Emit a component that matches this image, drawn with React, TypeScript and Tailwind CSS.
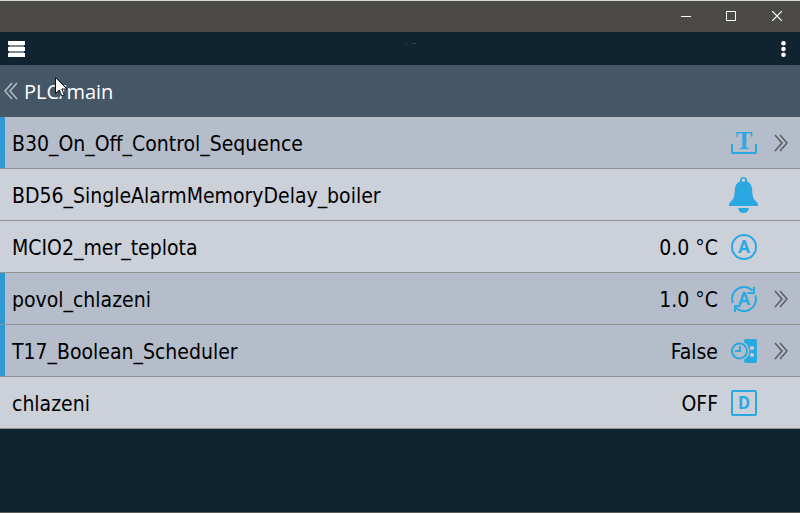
import type { ReactNode } from "react";

type IconName = "text" | "bell" | "analog" | "analogLoop" | "scheduler" | "digital";

type Point = {
  name: string;
  value?: string;
  icon: IconName;
  expandable?: boolean;
};

const points: Point[] = [
  { name: "B30_On_Off_Control_Sequence", icon: "text", expandable: true },
  { name: "BD56_SingleAlarmMemoryDelay_boiler", icon: "bell" },
  { name: "MCIO2_mer_teplota", value: "0.0 °C", icon: "analog" },
  { name: "povol_chlazeni", value: "1.0 °C", icon: "analogLoop", expandable: true },
  { name: "T17_Boolean_Scheduler", value: "False", icon: "scheduler", expandable: true },
  { name: "chlazeni", value: "OFF", icon: "digital" },
];

function Letter({ children }: { children: string }) {
  return (
    <text
      x="15"
      y="26"
      textAnchor="middle"
      fill="currentColor"
      className="font-['Roboto',sans-serif] text-[18px] font-bold"
    >
      {children}
    </text>
  );
}

const icons: Record<IconName, ReactNode> = {
  text: (
    <>
      <path
        d="M3 21v7.500q0 1.500 1.500 1.500h21q1.500 0 1.500-1.500V21"
        fill="none"
        stroke="currentColor"
        strokeWidth="2"
      />
      <text
        x="15"
        y="26"
        textAnchor="middle"
        fill="currentColor"
        className="font-['Liberation_Serif',serif] text-[25px] font-bold"
      >
        T
      </text>
    </>
  ),
  bell: (
    <>
      <path
        fill="currentColor"
        fillRule="evenodd"
        d="M14.500 2c2 0 3.500 1.400 3.500 3.200v1c3 1.300 4.700 4 5 7.300l.6 6.500c.3 3 1.600 4.700 3.600 6.500 1.300 1.200 1.800 2 1.800 4.500H0c0-2.500.5-3.300 1.800-4.500 2-1.800 3.300-3.500 3.600-6.500l.6-6.500c.3-3.300 2-6 5-7.300v-1C11 3.400 12.500 2 14.500 2zm0 1.600a1.700 1.700 0 1 0 0 3.400 1.700 1.700 0 0 0 0-3.400z"
      />
      <path d="M9 33h11c-.6 3-2.600 5-5.500 5S9.600 36 9 33z" fill="currentColor" />
    </>
  ),
  analog: (
    <>
      <circle cx="15" cy="20" r="12" fill="none" stroke="currentColor" strokeWidth="2" />
      <Letter>A</Letter>
    </>
  ),
  analogLoop: (
    <>
      <path
        d="M3.700 24.100A12 12 0 0 1 23.500 11.500M26.500 16.500A12 12 0 0 1 6.500 28.500"
        fill="none"
        stroke="currentColor"
        strokeWidth="2"
      />
      <path d="M18.500 14H25V8M11.500 27H6v6" fill="none" stroke="currentColor" strokeWidth="2" />
      <Letter>A</Letter>
    </>
  ),
  scheduler: (
    <>
      <path
        d="M17 8h9a2 2 0 0 1 2 2v20a2 2 0 0 1-2 2h-9a2 2 0 0 1-2-2v-1.500a9.500 9.500 0 0 0 0-17V10a2 2 0 0 1 2-2z"
        fill="currentColor"
      />
      <circle cx="10.500" cy="20" r="7.500" fill="none" stroke="currentColor" strokeWidth="2" />
      <path d="M11 15v5H6" fill="none" stroke="currentColor" strokeWidth="2" />
      <circle cx="23" cy="17" r="2" className="fill-[#ccd0d9]" />
      <circle cx="23" cy="24" r="2" className="fill-[#ccd0d9]" />
    </>
  ),
  digital: (
    <>
      <rect x="3" y="8" width="24" height="24" rx="1" fill="none" stroke="currentColor" strokeWidth="2" />
      <Letter>D</Letter>
    </>
  ),
};

function Chevrons({ className = "" }: { className?: string }) {
  return (
    <svg width="14" height="18" viewBox="0 0 14 18" className={className} aria-hidden="true">
      <path d="M1 1l7 8-7 8M6 1l7 8-7 8" fill="none" stroke="currentColor" strokeWidth="1.500" />
    </svg>
  );
}

function PointRow({ point }: { point: Point }) {
  const tone = point.expandable
    ? "border-l-5 border-l-[#2d98d4] bg-[#b5bdca] pl-[7px]"
    : "bg-[#ccd0d9] pl-3";

  return (
    <li className="border-b border-[#929292]">
      <a href="#" className={`flex items-center py-1.5 pr-3 ${tone}`}>
        <span className="min-w-0 flex-1 truncate pt-0.5">{point.name}</span>
        <span className="mr-[11px] pt-0.5">{point.value}</span>
        <svg
          width="30"
          height="39"
          viewBox="0 0 30 39"
          className="mr-[15px] text-[#29a8e2]"
          aria-hidden="true"
        >
          {icons[point.icon]}
        </svg>
        <span className="w-3.5 text-[#5b5d61]">{point.expandable ? <Chevrons /> : null}</span>
      </a>
    </li>
  );
}

function TitleBar() {
  return (
    <div className="flex h-8 items-center justify-end border-t border-[#d3d6d2] bg-[#4b4a47] pb-px text-white">
      <button type="button" aria-label="Minimize" className="flex w-11 justify-center">
        <svg width="10" height="10" viewBox="0 0 10 10" stroke="currentColor">
          <path d="M0 5.500h10" />
        </svg>
      </button>
      <button type="button" aria-label="Maximize" className="flex w-[46px] justify-center">
        <svg width="10" height="10" viewBox="0 0 10 10" fill="none" stroke="currentColor">
          <path d="M.5.5h9v9h-9z" />
        </svg>
      </button>
      <button type="button" aria-label="Close" className="flex w-[46px] justify-center">
        <svg width="10" height="10" viewBox="0 0 10 10" stroke="currentColor" strokeWidth="1.200">
          <path d="M0 0l10 10M10 0L0 10" />
        </svg>
      </button>
    </div>
  );
}

function Toolbar() {
  return (
    <header className="grid h-[33px] grid-cols-3 items-center px-2 text-white">
      <button type="button" aria-label="Menu" className="justify-self-start">
        <svg width="17" height="16" viewBox="0 0 17 16">
          <path d="M1 0h15v16H1z" className="fill-[#7e8890]" />
          <path d="M0 0h17v4H0zM0 6h17v4H0zM0 12h17v4H0z" fill="currentColor" />
        </svg>
      </button>
      <svg width="32" height="12" viewBox="0 0 32 12" className="justify-self-center" aria-hidden="true">
        <path d="M21 .5h2M28 .5h4" className="stroke-[#30414e]" />
      </svg>
      <button type="button" aria-label="More" className="mr-1.5 justify-self-end">
        <svg width="5" height="16" viewBox="0 0 5 16" fill="currentColor">
          <circle cx="2.500" cy="2.300" r="2.300" />
          <circle cx="2.500" cy="8" r="2.300" />
          <circle cx="2.500" cy="13.700" r="2.300" />
        </svg>
      </button>
    </header>
  );
}

export default function App() {
  return (
    <div className="relative flex min-h-screen flex-col border-b border-[#5c5c5a] bg-[#102331]">
      <TitleBar />
      <Toolbar />
      <nav className="flex h-[52px] items-center bg-[#455666] px-1 font-['Open_Sans',sans-serif] text-xl text-white">
        <a href="#" className="flex items-center gap-1.5">
          <Chevrons className="rotate-180 text-[#b4bcc4]" />
          <span className="pt-0.5">PLC/main</span>
        </a>
      </nav>
      <ul className="font-['DejaVu_Sans_Condensed','DejaVu_Sans',sans-serif] text-[21px] leading-7 text-black">
        {points.map((point) => (
          <PointRow key={point.name} point={point} />
        ))}
      </ul>
      <svg
        width="13"
        height="20"
        viewBox="0 0 13 20"
        className="pointer-events-none absolute top-[77px] left-[55px]"
        aria-hidden="true"
      >
        <path d="M.5.5v16l3.700-3.500 2.500 6 2.600-1.100-2.500-5.900h5.200z" fill="#fff" stroke="#111" />
      </svg>
    </div>
  );
}
